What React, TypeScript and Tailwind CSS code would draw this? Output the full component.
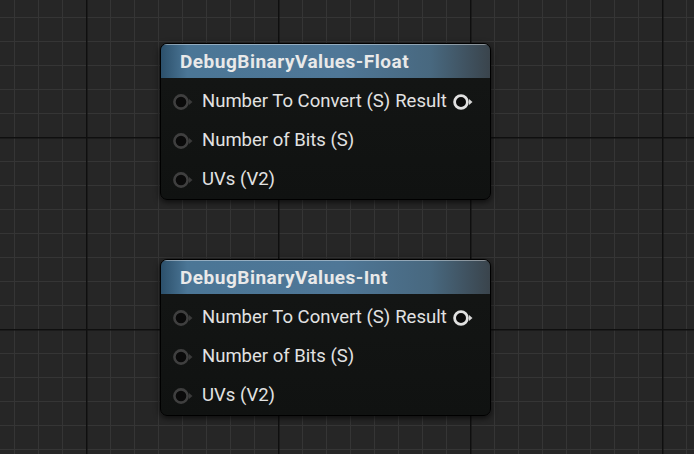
import type { ReactNode } from "react";

type Pin = { label: string; output?: string };

const pins: Pin[] = [
  { label: "Number To Convert (S)", output: "Result" },
  { label: "Number of Bits (S)" },
  { label: "UVs (V2)" },
];

function InputPin() {
  return (
    <svg width="22" height="18" viewBox="0 0 22 18" className="shrink-0 w-[22px] h-[18px]">
      <path d="M17 6 L20.5 9 L17 12 Z" fill="#3a3a3a" />
      <circle cx="9" cy="9" r="6.6" fill="#0a0a0a" stroke="#3f3f3f" strokeWidth="2.6" />
    </svg>
  );
}

function OutputPin() {
  return (
    <svg width="22" height="18" viewBox="0 0 22 18" className="shrink-0 w-[22px] h-[18px]">
      <path d="M17 6 L20.5 9 L17 12 Z" fill="#d6d6d6" />
      <circle cx="9" cy="9" r="6.4" fill="#0a0a0a" stroke="#e0e0e0" strokeWidth="2.8" />
    </svg>
  );
}

function Node({ title, className }: { title: string; className: string }): ReactNode {
  return (
    <div
      className={`absolute w-[331px] h-[157px] rounded-[7px] border border-black bg-[linear-gradient(180deg,#141615,#101211)] shadow-[0_2px_6px_rgba(0,0,0,0.7)] overflow-hidden ${className}`}
    >
      <div className="h-[34px] flex items-center pl-[19px] bg-[linear-gradient(90deg,#2c506b_0%,#4b7696_8%,#4f7797_55%,#48687f_82%,#3a444c_100%)] shadow-[inset_0_1px_0_rgba(255,255,255,0.4)]">
        <span className="text-[19px] font-bold text-[#e9e9e9] tracking-[0.5px] leading-none">{title}</span>
      </div>
      <div className="pt-[4px]">
        {pins.map((p) => (
          <div key={p.label} className="h-[39px] flex items-center pl-[11px]">
            <InputPin />
            <span className="ml-[8px] text-[18.5px] text-[#e2e2e2] leading-none">{p.label}</span>
            {p.output && (
              <>
                <span className="ml-[5px] text-[18.5px] text-[#e2e2e2] leading-none">{p.output}</span>
                <span className="ml-[5px]">
                  <OutputPin />
                </span>
              </>
            )}
          </div>
        ))}
      </div>
    </div>
  );
}

export default function App() {
  return (
    <div className="relative w-[694px] h-[454px] overflow-hidden bg-[#262626] font-['Roboto','Liberation_Sans',sans-serif]">
      <svg className="absolute inset-0" width="694" height="454">
        <defs>
          <pattern id="minor" x="14" y="17" width="24" height="24" patternUnits="userSpaceOnUse">
            <rect x="0" y="0" width="1" height="24" fill="#353535" />
            <rect x="0" y="0" width="24" height="1" fill="#353535" />
          </pattern>
          <pattern id="major" x="86" y="137" width="192" height="192" patternUnits="userSpaceOnUse">
            <rect x="0" y="0" width="1.5" height="192" fill="#0f0f0f" />
            <rect x="0" y="0" width="192" height="1.5" fill="#0f0f0f" />
          </pattern>
        </defs>
        <rect width="694" height="454" fill="url(#minor)" />
        <rect width="694" height="454" fill="url(#major)" />
      </svg>
      <Node title="DebugBinaryValues-Float" className="left-[160px] top-[43px]" />
      <Node title="DebugBinaryValues-Int" className="left-[160px] top-[259px]" />
    </div>
  );
}
